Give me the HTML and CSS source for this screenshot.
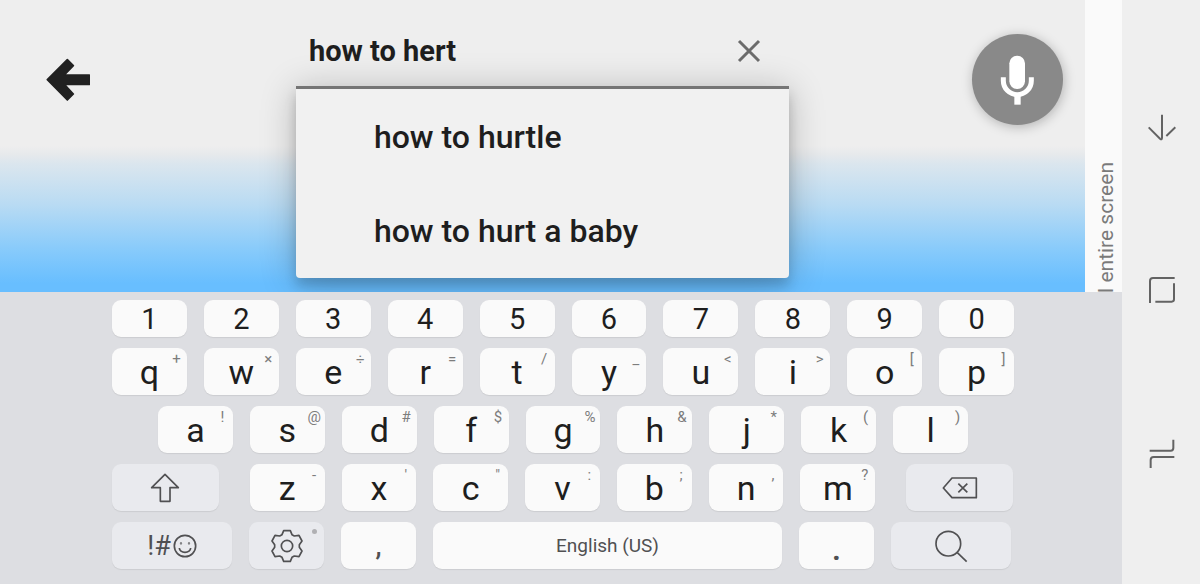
FILE: index.html
```html
<!DOCTYPE html>
<html lang="en">
<head>
    <meta charset="UTF-8">
    <meta name="viewport" content="width=device-width, initial-scale=1.0">
    <title>Search</title>
    <link rel="stylesheet" href="styles.css">
</head>
<body>

    <div class="screen">
        <!-- Search area -->
        <div class="app">
            <main class="main">
                <button class="back" aria-label="Back">
                    <svg width="44" height="44" viewBox="138 173 132 132"><path d="M142 238L202 178L220 196L193 224H268V252H193L220 281L202 299Z" fill="#212121" stroke="#212121" stroke-width="5" stroke-linejoin="round"/></svg>
                </button>

                <div class="search">
                    <div class="field">
                        <input type="text" class="query" aria-label="Search" value="how to hert">
                        <button class="clear" aria-label="Clear">
                            <svg width="24" height="24" viewBox="0 0 24 24"><path d="M2 2L22 22M22 2L2 22" fill="none" stroke="#6b6b6b" stroke-width="3"/></svg>
                        </button>
                    </div>
                    <ul class="suggestions">
                        <li><button class="suggestion">how to hurtle</button></li>
                        <li><button class="suggestion">how to hurt a baby</button></li>
                    </ul>
                </div>

                <button class="mic" aria-label="Voice search">
                    <svg width="34" height="50" viewBox="900 163 102 150"><rect x="928" y="165" width="47" height="100" rx="23" fill="#fff"/><path d="M910 230V240A42 42 0 0 0 994 240V230" fill="none" stroke="#fff" stroke-width="15"/><path d="M943 284H962V312H943Z" fill="#fff"/></svg>
                </button>
            </main>
            <aside class="side"><span class="side-text">l entire screen</span></aside>
        </div>

        <!-- Keyboard -->
        <div class="keyboard">
            <div class="row numbers">
                <button class="key">1</button>
                <button class="key">2</button>
                <button class="key">3</button>
                <button class="key">4</button>
                <button class="key">5</button>
                <button class="key">6</button>
                <button class="key">7</button>
                <button class="key">8</button>
                <button class="key">9</button>
                <button class="key">0</button>
            </div>
            <div class="row">
                <button class="key">q<span class="hint">+</span></button>
                <button class="key">w<span class="hint">×</span></button>
                <button class="key">e<span class="hint">÷</span></button>
                <button class="key">r<span class="hint">=</span></button>
                <button class="key">t<span class="hint">/</span></button>
                <button class="key">y<span class="hint">_</span></button>
                <button class="key">u<span class="hint">&lt;</span></button>
                <button class="key">i<span class="hint">&gt;</span></button>
                <button class="key">o<span class="hint">[</span></button>
                <button class="key">p<span class="hint">]</span></button>
            </div>
            <div class="row middle">
                <button class="key">a<span class="hint">!</span></button>
                <button class="key">s<span class="hint">@</span></button>
                <button class="key">d<span class="hint">#</span></button>
                <button class="key">f<span class="hint">$</span></button>
                <button class="key">g<span class="hint">%</span></button>
                <button class="key">h<span class="hint">&amp;</span></button>
                <button class="key">j<span class="hint">*</span></button>
                <button class="key">k<span class="hint">(</span></button>
                <button class="key">l<span class="hint">)</span></button>
            </div>
            <div class="row lower">
                <button class="key fn shift" aria-label="Shift">
                    <svg width="30" height="30" viewBox="150 37 90 90"><path d="M195 41L235 81H210V122H181V81H155Z"/></svg>
                </button>
                <button class="key">z<span class="hint">-</span></button>
                <button class="key">x<span class="hint">'</span></button>
                <button class="key">c<span class="hint">"</span></button>
                <button class="key">v<span class="hint">:</span></button>
                <button class="key">b<span class="hint">;</span></button>
                <button class="key">n<span class="hint">,</span></button>
                <button class="key">m<span class="hint">?</span></button>
                <button class="key fn delete" aria-label="Backspace">
                    <svg width="36" height="22" viewBox="606 559 108 66"><path d="M610 592L636 562H709V621H636ZM655 579L682 605M682 579L655 605"/></svg>
                </button>
            </div>
            <div class="row bottom">
                <button class="key fn wide symbols" aria-label="Symbols and emoji">
                    !#<svg width="24" height="24" viewBox="219 219 72 72"><circle cx="255" cy="255" r="32"/><path d="M238 261A17 13 0 0 0 272 261"/><circle cx="243" cy="247" r="1"/><circle cx="267" cy="247" r="1"/></svg>
                </button>
                <button class="key fn" aria-label="Settings">
                    <svg width="32" height="34" viewBox="-48 -51 96 102"><path d="M-10-46H10L15-34L22-30L36-32L45-15L37-4V4L45 15L36 32L22 30L15 34L10 46H-10L-15 34L-22 30L-36 32L-45 15L-37 4V-4L-45-15L-36-32L-22-30L-15-34Z"/><circle r="17"/></svg>
                    <span class="dot"></span>
                </button>
                <button class="key comma">,</button>
                <button class="key space">English (US)</button>
                <button class="key period">.</button>
                <button class="key fn wide" aria-label="Search">
                    <svg width="34" height="34" viewBox="581 712 102 102"><circle cx="624" cy="756" r="37"/><path d="M651 783L679 810"/></svg>
                </button>
            </div>
        </div>
    </div>

    <!-- System navigation -->
    <nav class="nav">
        <button aria-label="Hide keyboard">
            <svg width="28" height="28" viewBox="205 68 84 84"><path d="M247 73V142Q247 150 241 145L207 111M287 111L260 137"/></svg>
        </button>
        <button aria-label="Home">
            <svg width="28" height="28" viewBox="205 560 84 84"><path d="M211 641V575Q211 566 220 566H285M283 582V630Q283 637 276 637H227"/></svg>
        </button>
        <button aria-label="Recent apps">
            <svg width="28" height="30" viewBox="1225 448 84 90"><path d="M1301 450V475Q1301 483 1293 483H1230M1304 502H1242Q1233 502 1233 511V535"/></svg>
        </button>
    </nav>

</body>
</html>
```
FILE: styles.css
```css
* {
    box-sizing: border-box;
}
body {
    margin: 0;
    min-height: 100vh;
    display: flex;
    font-family: Roboto, Arial, sans-serif;
    color: #1e1e1e;
    background: #efefef;
}
button, input {
    margin: 0;
    padding: 0;
    border: none;
    background: none;
    font-family: inherit;
    color: inherit;
}
svg {
    display: block;
    flex: none;
}
.screen {
    flex: 1;
    display: flex;
    flex-direction: column;
}

/* search area */
.app {
    flex: 1;
    display: flex;
    overflow: hidden;
}
.main {
    flex: 1;
    display: grid;
    grid-template-columns: 3fr 5fr 3fr;
    align-items: start;
    background: linear-gradient(#eee 50%, #e6e9ec 53%, #dbe6ee 56%, #b9dbf3 70%, #86cafb 86%, #68beff 97%);
}
.back {
    margin: 58px 0 0 46px;
    justify-self: start;
}
.field {
    display: flex;
    align-items: center;
    padding: 16px 28px 0 13px;
    height: 86px;
}
.query {
    flex: 1;
    min-width: 0;
    font-size: 29px;
    font-weight: bold;
    outline: none;
}
.suggestions {
    list-style: none;
    margin: 0;
    padding: 1px 0 0;
    border-top: 3px solid #757575;
    border-radius: 0 0 4px 4px;
    background: #f1f1f1;
    box-shadow: 0 8px 12px rgba(0, 0, 0, 0.16), 0 4px 36px rgba(0, 0, 0, 0.24);
}
.suggestion {
    width: 100%;
    height: 94px;
    padding-left: 78px;
    font-size: 32px;
    font-weight: 500;
    text-align: left;
}
.mic {
    display: flex;
    align-items: center;
    justify-content: center;
    justify-self: end;
    width: 91px;
    height: 91px;
    margin: 34px 22px 0 0;
    border-radius: 50%;
    background: #898989;
    box-shadow: 1px 2px 12px rgba(0, 0, 0, 0.25);
}
.side {
    width: 37px;
    height: 292px;
    padding: 162px 6px 0 0;
    display: flex;
    justify-content: flex-end;
    align-items: flex-start;
    background: #fafafa;
}
.side-text {
    writing-mode: vertical-rl;
    transform: rotate(180deg);
    white-space: nowrap;
    font-size: 21px;
    line-height: 20px;
    color: #7a7a7a;
}

/* keyboard */
.keyboard {
    position: relative;
    display: flex;
    flex-direction: column;
    gap: 11px;
    padding: 8px 108px 15px 112px;
    background: #dddee2;
}
.row {
    display: flex;
    gap: 17px;
    height: 47px;
}
.numbers {
    height: 37px;
}
.middle {
    padding: 0 46px;
}
.lower {
    padding-right: 1px;
}
.bottom {
    padding-right: 3px;
}
.key {
    position: relative;
    flex: 75 1 0;
    min-width: 0;
    display: flex;
    align-items: center;
    justify-content: center;
    border-radius: 9px;
    background: #fafafa;
    box-shadow: 0 1px 1px rgba(0, 0, 0, 0.08);
    font-size: 34px;
}
.numbers .key {
    font-size: 29px;
}
.hint {
    position: absolute;
    top: 0;
    right: 0;
    width: 21px;
    font-size: 15px;
    line-height: 23px;
    text-align: center;
    color: #7d7d7d;
}
.fn {
    background: #e9eaee;
}
.key svg {
    fill: none;
    stroke: #505052;
    stroke-width: 5;
    stroke-linejoin: round;
}
.shift, .delete {
    flex-grow: 107;
}
.shift {
    margin-right: 14px;
}
.delete {
    margin-left: 14px;
}
.wide {
    flex-grow: 120;
}
.bottom .key {
    color: #505052;
}
.bottom .symbols {
    font-size: 27px;
    gap: 2px;
}
.dot {
    position: absolute;
    top: 7px;
    right: 7px;
    width: 5px;
    height: 5px;
    border-radius: 50%;
    background: #b0b0b3;
}
.bottom .comma {
    font-size: 27px;
    font-weight: 500;
}
.bottom .period {
    padding-top: 4px;
    font-weight: 500;
}
.bottom .space {
    flex-grow: 349;
    font-size: 19px;
}

/* system navigation */
.nav {
    width: 78px;
    display: flex;
    flex-direction: column;
    align-items: center;
    justify-content: center;
    gap: 135px;
    padding: 0 0 2px 2px;
}
.nav svg {
    fill: none;
    stroke: #636363;
    stroke-width: 6;
}
```
